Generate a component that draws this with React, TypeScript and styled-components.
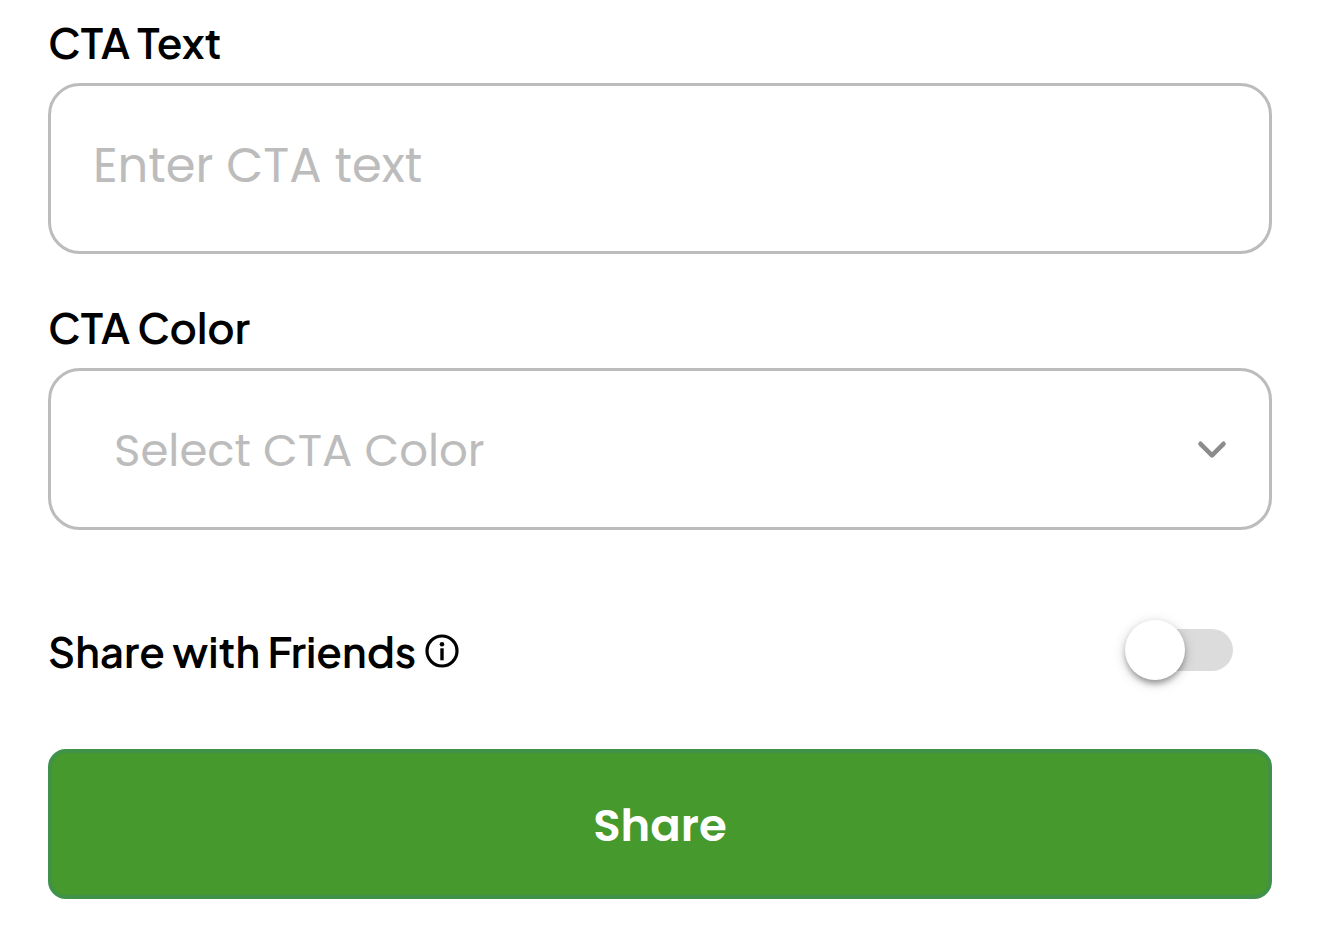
import React, { useState } from "react";
import styled, { createGlobalStyle } from "styled-components";

const GlobalStyle = createGlobalStyle`
  *, *::before, *::after { box-sizing: border-box; }
  body { margin: 0; background: #fff; color: #000; }
`;

const labelFont = `"Plus Jakarta Sans", Lato, sans-serif`;
const controlFont = `Poppins, Inter, sans-serif`;

const Form = styled.form`
  display: flex;
  flex-direction: column;
  padding: 15px 48px 40px;
`;

const Field = styled.div`
  display: flex;
  flex-direction: column;
  gap: 14px;
  margin-bottom: 46px;
`;

const Label = styled.label`
  font: 600 42px/54px ${labelFont};
`;

const TextInput = styled.input`
  width: 100%;
  height: 171px;
  padding: 0 42px 6px;
  border: 3px solid #bcbcbc;
  border-radius: 32px;
  background: #fff;
  color: #000;
  font: 400 48px/60px ${controlFont};
  &::placeholder { color: #bcbcbc; opacity: 1; }
`;

const SelectBox = styled.div`
  display: grid;
  align-items: center;
  > * { grid-area: 1 / 1; }
`;

const Select = styled.select`
  appearance: none;
  width: 100%;
  height: 162px;
  padding: 4px 100px 0 63px;
  border: 3px solid #bcbcbc;
  border-radius: 32px;
  background: #fff;
  color: #bcbcbc;
  font: 400 45px/60px ${controlFont};
`;

const Chevron = styled.svg`
  justify-self: end;
  width: 36px;
  height: 36px;
  margin-right: 42px;
  pointer-events: none;
`;

const ShareRow = styled.div`
  display: flex;
  align-items: center;
  justify-content: space-between;
  margin: 44px 0 69px;
  padding-right: 39px;
`;

const ShareTitle = styled.div`
  display: flex;
  align-items: center;
  gap: 8px;
  padding-top: 2px;
`;

const InfoButton = styled.button`
  display: flex;
  padding: 0;
  border: 0;
  background: none;
  color: #000;
`;

const Switch = styled.input`
  appearance: none;
  position: relative;
  width: 108px;
  height: 60px;
  margin: 0;
  cursor: pointer;
  &::before {
    content: "";
    position: absolute;
    inset: 9px 0 9px 6px;
    border-radius: 21px;
    background: #dcdcdc;
  }
  &::after {
    content: "";
    position: absolute;
    top: 0;
    left: 0;
    width: 60px;
    height: 60px;
    border-radius: 50%;
    background: #fff;
    box-shadow: 0 6px 6px -3px rgba(0, 0, 0, 0.2), 0 3px 6px rgba(0, 0, 0, 0.2),
      0 3px 14px rgba(0, 0, 0, 0.16);
  }
  &:checked::before { background: #46992c; }
  &:checked::after { left: 48px; }
`;

const SubmitButton = styled.button`
  width: 100%;
  height: 150px;
  padding: 4px 0 0;
  border: 4px solid #409149;
  border-radius: 18px;
  background: #46992c;
  color: #fff;
  font: 600 45px/60px ${controlFont};
  cursor: pointer;
`;

export default function App() {
  const [shared, setShared] = useState(false);
  return (
    <>
      <GlobalStyle />
      <Form onSubmit={(e: React.FormEvent) => e.preventDefault()}>
        <Field>
          <Label htmlFor="cta-text">CTA Text</Label>
          <TextInput id="cta-text" type="text" placeholder="Enter CTA text" />
        </Field>
        <Field>
          <Label htmlFor="cta-color">CTA Color</Label>
          <SelectBox>
            <Select id="cta-color" defaultValue="">
              <option value="">Select CTA Color</option>
            </Select>
            <Chevron viewBox="0 0 36 36" fill="none" aria-hidden="true">
              <path d="M6.5 12.8 18 24.3l11.5-11.5" stroke="#8c8c8c" strokeWidth="4.6" strokeLinecap="round" strokeLinejoin="round" />
            </Chevron>
          </SelectBox>
        </Field>
        <ShareRow>
          <ShareTitle>
            <Label htmlFor="share-friends">Share with Friends</Label>
            <InfoButton type="button" aria-label="About sharing with friends">
              <svg width="36" height="36" viewBox="0 0 36 36" aria-hidden="true">
                <circle cx="18" cy="18" r="15" fill="none" stroke="currentColor" strokeWidth="3.2" />
                <circle cx="18" cy="11.3" r="2.3" fill="currentColor" />
                <path d="M18 15.3v12" stroke="currentColor" strokeWidth="3.4" />
              </svg>
            </InfoButton>
          </ShareTitle>
          <Switch
            id="share-friends"
            type="checkbox"
            role="switch"
            checked={shared}
            onChange={(e: React.ChangeEvent<HTMLInputElement>) => setShared(e.target.checked)}
          />
        </ShareRow>
        <SubmitButton type="submit">Share</SubmitButton>
      </Form>
    </>
  );
}
